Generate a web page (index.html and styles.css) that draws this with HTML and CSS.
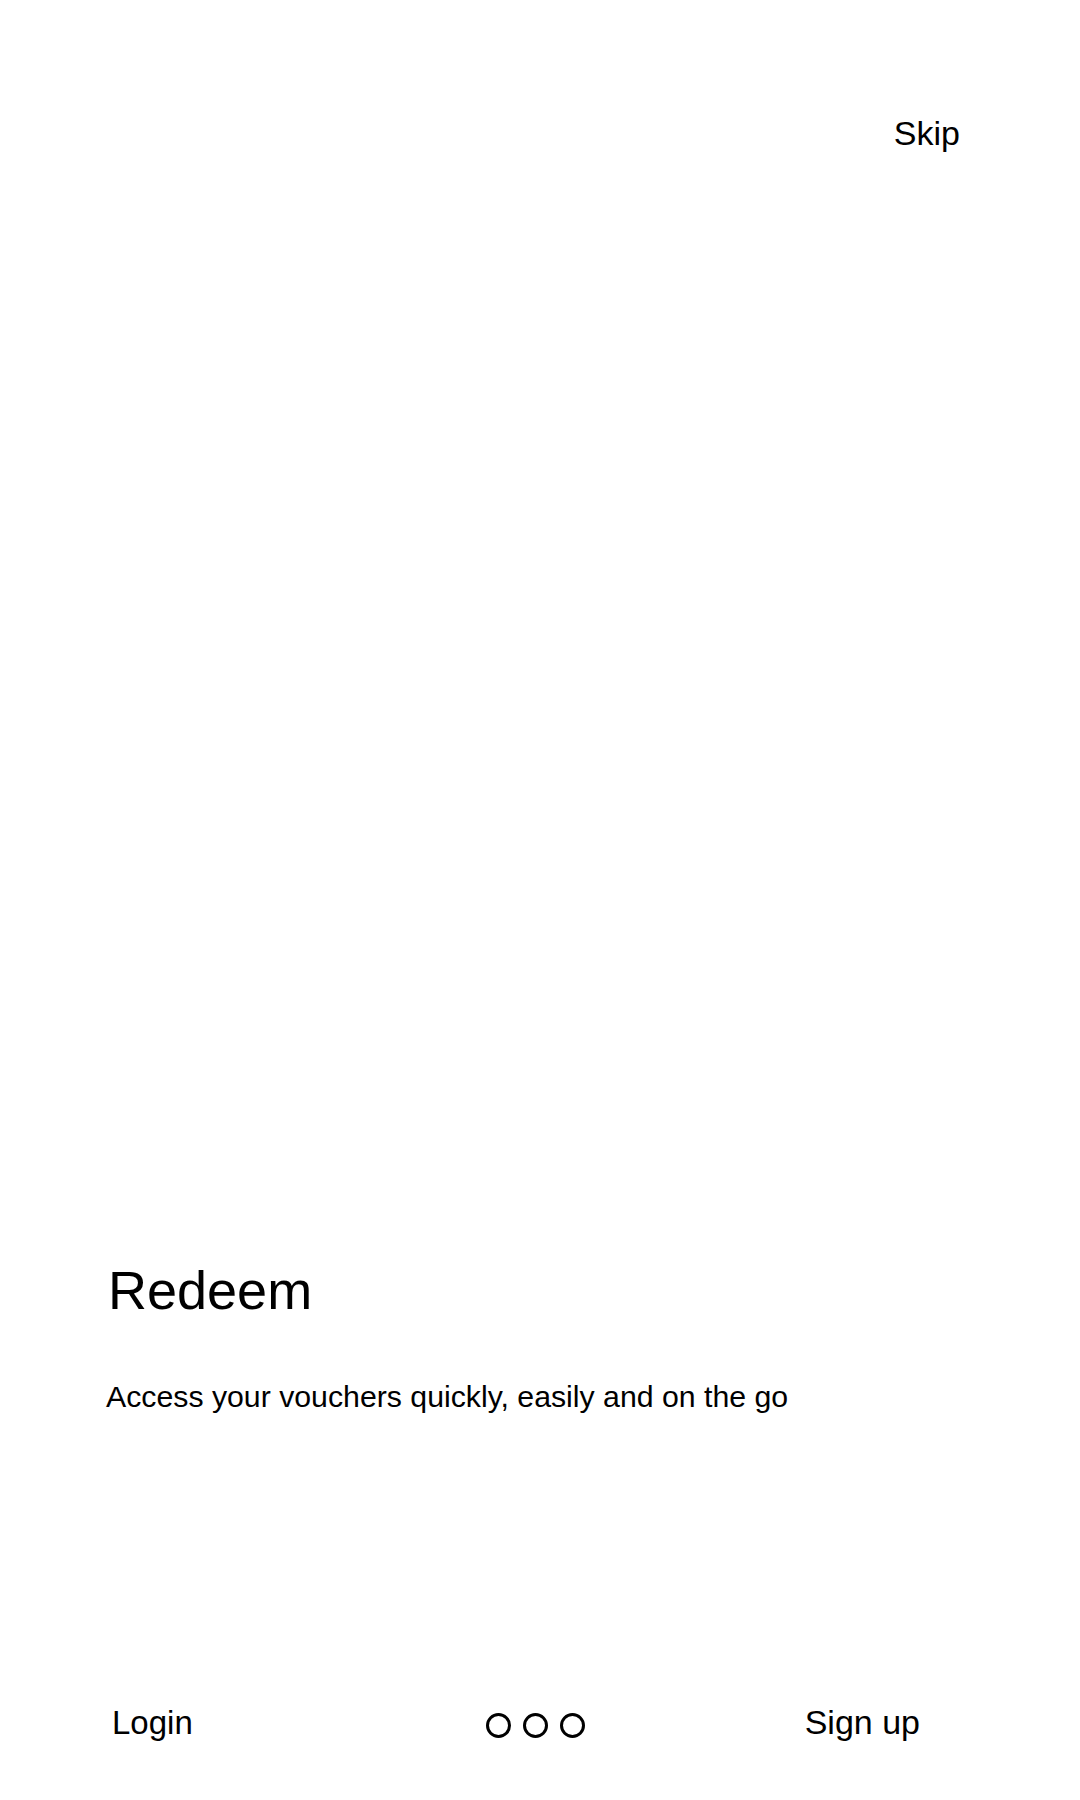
FILE: index.html
```html
<!DOCTYPE html>
<html lang="en">
<head>
<meta charset="utf-8">
<title>Redeem</title>
<link rel="stylesheet" href="styles.css">
</head>
<body>
<div class="screen">
  <div class="top">
    <a class="skip">Skip</a>
  </div>
  <section class="intro">
    <h1 class="title">Redeem</h1>
    <p class="desc">Access your vouchers quickly, easily and on the go</p>
  </section>
  <nav class="footer">
    <a class="login">Login</a>
    <div class="dots">
      <span class="dot"></span>
      <span class="dot"></span>
      <span class="dot"></span>
    </div>
    <a class="signup">Sign up</a>
  </nav>
</div>
</body>
</html>
```
FILE: styles.css
```css
html, body {
  margin: 0;
  padding: 0;
  background: #ffffff;
}
body {
  font-family: "Liberation Sans", Arial, sans-serif;
  color: #000000;
}
.screen {
  width: 1080px;
  height: 1800px;
  display: flex;
  flex-direction: column;
}
.top {
  display: flex;
  justify-content: flex-end;
  padding: 116px 120px 0 0;
}
.skip {
  font-size: 34px;
  line-height: 1;
}
.intro {
  margin-top: 1113px;
  padding-left: 106px;
}
.title {
  margin: 0 0 0 2px;
  font-size: 54px;
  font-weight: normal;
  line-height: 1;
}
.desc {
  margin: 65px 0 0 0;
  font-size: 30.25px;
  line-height: 1;
}
.footer {
  margin-top: 293px;
  display: flex;
  align-items: center;
  padding: 0 160px 0 112px;
}
.login {
  font-size: 33px;
  line-height: 1;
}
.signup {
  font-size: 34px;
  line-height: 1;
  margin-left: auto;
}
.dots {
  display: flex;
  gap: 12px;
  margin-left: 293px;
  margin-top: 6px;
}
.dot {
  width: 19px;
  height: 19px;
  border: 3px solid #000;
  border-radius: 50%;
}
```
